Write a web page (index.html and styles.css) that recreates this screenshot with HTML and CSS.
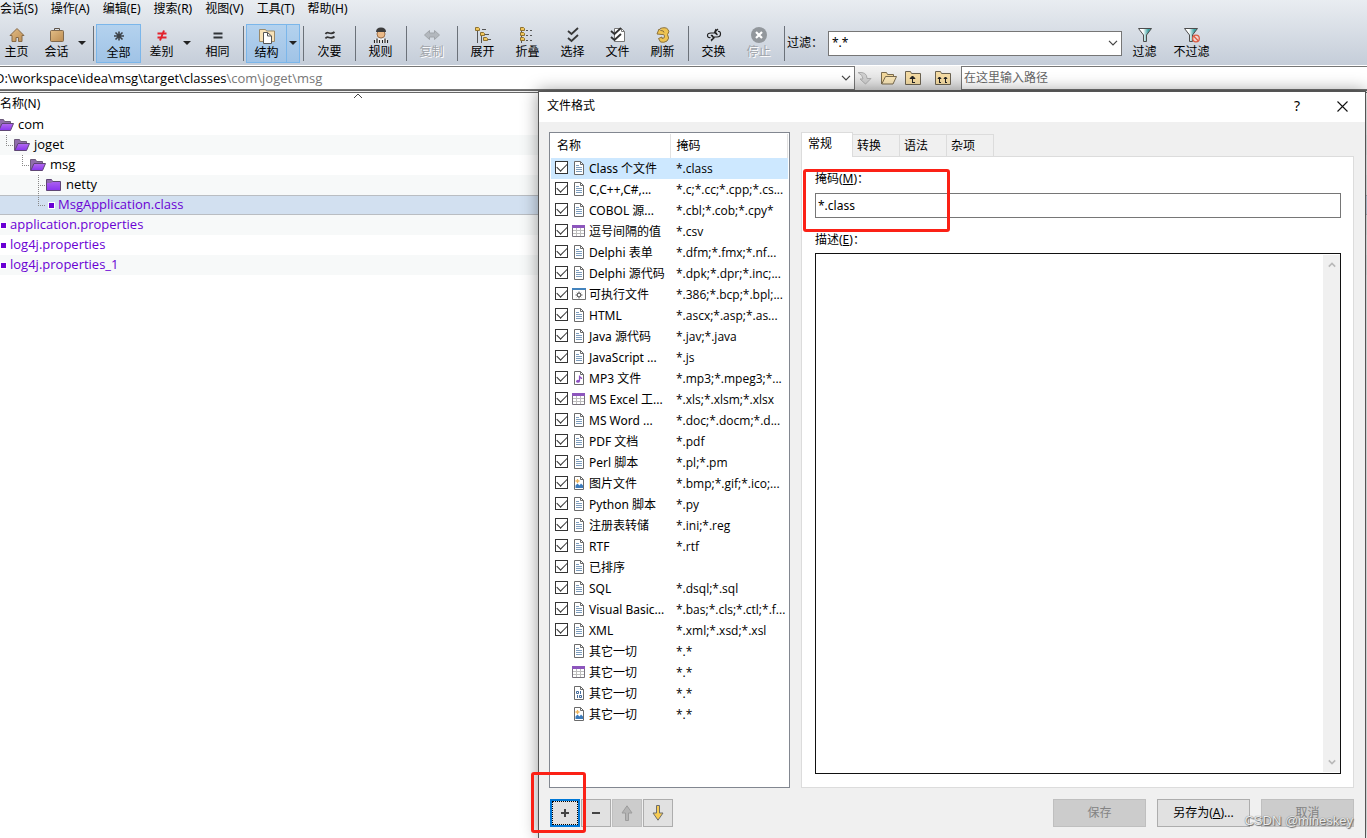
FILE: index.html
```html
<!DOCTYPE html>
<html lang="zh-CN">
<head>
<meta charset="utf-8">
<title>文件格式</title>
<link rel="stylesheet" href="styles.css">
</head>
<body>
<svg class="defs" aria-hidden="true">
  <defs>
    <linearGradient id="tan" x1="0" y1="0" x2="1" y2="1"><stop offset="0" stop-color="#e2bd86"/><stop offset="1" stop-color="#bd8d52"/></linearGradient>
    <linearGradient id="teal" x1="0" y1="0" x2="1" y2="0"><stop offset="0.35" stop-color="#ffffff"/><stop offset="0.75" stop-color="#3fa3a3"/></linearGradient>
    <linearGradient id="violet" x1="0" y1="0" x2="0" y2="1"><stop offset="0" stop-color="#b36bf0"/><stop offset="1" stop-color="#8a35ee"/></linearGradient>
    <symbol id="doc" viewBox="0 0 14 14"><path d="M2.500.5h6l3 3v10h-9z" fill="#fff" stroke="#6a6a6a"/><path d="M8.500.5v3h3" fill="none" stroke="#6a6a6a"/><path d="M4 4.500h3M4 6.500h6M4 8.500h6M4 10.500h6" stroke="#7c9cbc"/></symbol>
    <symbol id="grid" viewBox="0 0 14 14"><path d="M.5 1.500h12v11H.5z" fill="#fff" stroke="#77727c"/><path d="M1 6.500h11M1 9.500h11M4.500 4v8M8.500 4v8" stroke="#bdbdbd"/><path d="M0 1h13v3H0z" fill="#8d56bd"/></symbol>
    <symbol id="exe" viewBox="0 0 14 14"><path d="M.5 1.500h13v11H.5z" fill="#fff" stroke="#707070"/><path d="M0 1h14v2H0z" fill="#4383bd"/><circle cx="7" cy="8" r="1.800" fill="none" stroke="#666" stroke-width="1.200"/><path d="M7 4.500v1.500M7 10v1.500M3.500 8H5M9 8h1.500M4.800 5.800l1 1M8.200 9.200l1 1M9.200 5.800l-1 1M5.800 9.200l-1 1" stroke="#666"/></symbol>
    <symbol id="music" viewBox="0 0 14 14"><path d="M2.500.5h6l3 3v10h-9z" fill="#fff" stroke="#6a6a6a"/><path d="M8.500.5v3h3" fill="none" stroke="#6a6a6a"/><path d="M7.500 10V4.500q0 2 2 2.500v1" fill="none" stroke="#8d4fc0" stroke-width="1.200"/><ellipse cx="6" cy="10.300" rx="1.900" ry="1.500" fill="#8d4fc0"/></symbol>
    <symbol id="pic" viewBox="0 0 14 14"><path d="M2.500.5h6l3 3v10h-9z" fill="#fff" stroke="#6a6a6a"/><path d="M8.500.5v3h3" fill="none" stroke="#6a6a6a"/><path d="M3.500 12V9.500l2-2 2 2 1.500-2 2 2V12z" fill="#3c7bbb"/><path d="M5.500 3v4M3.500 5h4" stroke="#efb55a" stroke-width="1.300"/></symbol>
    <symbol id="bin" viewBox="0 0 14 14"><path d="M2.500.5h6l3 3v10h-9z" fill="#fff" stroke="#6a6a6a"/><path d="M8.500.5v3h3" fill="none" stroke="#6a6a6a"/><path d="M4.500 5.500h2v2h-2zM8.500 5v3M7.500 9.500h2v2h-2zM5.500 9v3" fill="none" stroke="#436b9c"/></symbol>
    <symbol id="vopen" viewBox="0 0 16 14"><path d="M.5 12.500V1.500h5l1 2h6v3" fill="#8f6cab" stroke="#6c5a7a"/><path d="M.8 12.500L4 5.500h11.500l-3 7z" fill="url(#violet)" stroke="#5f4675"/></symbol>
    <symbol id="vclosed" viewBox="0 0 16 14"><path d="M.5 12.500V1.500h5l1 2h8v9z" fill="url(#violet)" stroke="#5f4675"/><path d="M1 2h4.500l1 2L5 5H1z" fill="#8f6cab"/></symbol>
    <symbol id="funnel" viewBox="0 0 16 16"><path d="M1.500 1.500h13L9.500 8v6.500h-3V8z" fill="url(#teal)" stroke="#4d4d4d"/></symbol>
    <symbol id="chev" viewBox="0 0 10 6"><path d="M1 .8l4 4 4-4" fill="none" stroke="#444" stroke-width="1.200"/></symbol>
    <symbol id="tri" viewBox="0 0 8 4"><path d="M0 0h8L4 4z" fill="#222"/></symbol>
  </defs>
</svg>

<main class="app">
  <nav class="menu">
    <button>会话(S)</button><button>操作(A)</button><button>编辑(E)</button><button>搜索(R)</button><button>视图(V)</button><button>工具(T)</button><button>帮助(H)</button>
  </nav>

  <div class="toolbar">
    <button class="tool home"><svg viewBox="0 0 16 16"><path d="M8 1.500L1 8.500h2v6h4v-4h2.500v4H13v-6h2z" fill="url(#tan)" stroke="#866a48"/></svg>主页</button>
    <button class="tool narrow"><svg viewBox="0 0 16 16"><path d="M5.500 3V1.500h5V3" fill="none" stroke="#5d5348"/><rect x="1.500" y="3.500" width="13" height="11" rx="1" fill="url(#tan)" stroke="#80694e"/></svg>会话</button>
    <button class="drop" aria-label="会话选项"><svg><use href="#tri"/></svg></button>
    <i class="sep"></i>
    <button class="tool on"><svg viewBox="0 0 16 16"><path d="M8 3.500v9M3 8h10M4.500 4.500l7 7M11.500 4.500l-7 7" stroke="#3c4248" stroke-width="1.600"/></svg>全部</button>
    <button class="tool narrow"><svg viewBox="0 0 16 16"><path d="M3.500 6.500h9M3.500 10.500h9M10 3.500l-4 10" stroke="#e3222c" stroke-width="2"/></svg>差别</button>
    <button class="drop" aria-label="差别选项"><svg><use href="#tri"/></svg></button>
    <button class="tool"><svg viewBox="0 0 16 16"><path d="M3.500 6.500h9M3.500 10.500h9" stroke="#303438" stroke-width="2"/></svg>相同</button>
    <i class="sep"></i>
    <button class="tool narrow on"><svg viewBox="0 0 16 16"><path d="M.5 13.500v-12h6l1 1.500h8v10.500z" fill="#f7e2b8" stroke="#9b8a6a"/><path d="M4.500 4.500h4l4 3.500v7.500h-8z" fill="#fff" stroke="#555"/><path d="M8.500 4.500V8h4" fill="none" stroke="#555"/></svg>结构</button>
    <button class="drop on" aria-label="结构选项"><svg><use href="#tri"/></svg></button>
    <i class="sep"></i>
    <button class="tool"><svg viewBox="0 0 16 16"><path d="M3.500 7c2-4 4.500 2 9-2M3.500 11.500c2-4 4.500 2 9-2" fill="none" stroke="#333" stroke-width="1.700"/></svg>次要</button>
    <i class="sep"></i>
    <button class="tool"><svg viewBox="0 0 16 16"><circle cx="8" cy="7" r="4" fill="#eab987" stroke="#9c704b"/><path d="M3 5q0-4.500 5-4.500T13 5H3z" fill="#3c3c3c"/><path d="M.5 16q0-4 4.500-5l3 1.500 3-1.500q4.500 1 4.500 5z" fill="#f4f4f4"/><path d="M1.500 16v-3M4 16v-4.500M6.500 16v-3M9.500 16v-3M12 16v-4.500M14.500 16v-3" stroke="#222" stroke-width="1.200"/></svg>规则</button>
    <i class="sep"></i>
    <button class="tool" disabled><svg viewBox="0 0 16 16"><path d="M.5 8l5-4.500V6h5V3.500l5 4.500-5 4.500V10h-5v2.500z" fill="#b3b8be" stroke="#a0a5aa"/></svg>复制</button>
    <i class="sep"></i>
    <button class="tool"><svg viewBox="0 0 16 16"><path d="M2.500 4v12M6.500 6v10M2.500 2.500h2M7 2.500h4M10 7.500h4M13 12.500h3" stroke="#555" fill="none"/><path d="M.5.5h3l1 1v2h-4zM5.500 5.500h3l1 1v2h-4zM8.500 10.500h3l1 1v2h-4z" fill="#f1c65b" stroke="#8f7230"/></svg>展开</button>
    <button class="tool"><svg viewBox="0 0 16 16"><path d="M1.500 3v13M6 3.500h2M10 3.500h2M6 8.500h2M10 8.500h2M6 13.500h2M10 13.500h2" stroke="#555"/><path d="M.5.5h3l1 1v2h-4zM.5 5.500h3l1 1v2h-4zM.5 10.500h3l1 1v2h-4z" fill="#f1c65b" stroke="#8f7230"/></svg>折叠</button>
    <button class="tool"><svg viewBox="0 0 16 16"><path d="M3 4l3.500 3L13 1M3 11l3.500 3L13 8" fill="none" stroke="#383838" stroke-width="1.800"/></svg>选择</button>
    <button class="tool"><svg viewBox="0 0 16 16"><path d="M4.500 1.500h7l3 3v10h-10z" fill="#fff" stroke="#777"/><path d="M11.500 1.500v3h3" fill="none" stroke="#777"/><path d="M1 4l3.500 3L11 1M1 10l3.500 3L11 7" fill="none" stroke="#333" stroke-width="1.800"/></svg>文件</button>
    <button class="tool"><svg viewBox="0 0 16 16"><path d="M5 1.500q6-2 8 1 2 2-.5 5 2.500 4-.5 6.500-3 2-6.500 1L3.500 11.500 7 10v1.500q3 0 2.500-2.500T7 7.500L2 7l2-5 2 1.500q3 0 3 2" fill="#efc451" stroke="#8c713a"/></svg>刷新</button>
    <i class="sep"></i>
    <button class="tool"><svg viewBox="0 0 16 16"><path d="M10 6H5q-3.500 0-3.500 2.500T4.500 10.500M6 10h5q3.500 0 3.500-3T12 4.500M10 2L8.500 5.500 11.500 8M6 8l2 3-3 3M12 2l-3 3 2 2M5 8l3 3-3 2" fill="none" stroke="#222" stroke-width="1.200"/></svg>交换</button>
    <button class="tool" disabled><svg viewBox="0 0 16 16"><circle cx="8" cy="8" r="8" fill="#92979c"/><path d="M5 5l6 6M11 5l-6 6" stroke="#fff" stroke-width="2.200"/></svg>停止</button>
    <i class="sep"></i>
    <label class="filter-label" for="filter">过滤：</label>
    <span class="combo"><select id="filter"><option>*.*</option></select><svg class="chev"><use href="#chev"/></svg></span>
    <button class="tool"><svg><use href="#funnel"/></svg>过滤</button>
    <button class="tool wide"><svg viewBox="0 0 18 16"><path d="M1.500 1.500h13L9.500 8v6.500h-3V8z" fill="url(#teal)" stroke="#4d4d4d"/><circle cx="13" cy="11.500" r="3.300" fill="#f2d8d2" stroke="#dc5b42" stroke-width="1.300"/><path d="M10.800 9.300l4.400 4.400" stroke="#dc5b42" stroke-width="1.300"/></svg>不过滤</button>
  </div>

  <div class="pathbar">
    <button class="path" role="combobox" aria-expanded="false" aria-controls="tree" aria-label="路径"><span class="path-text">D:\workspace\idea\msg\target\classes<span class="dim">\com\joget\msg</span></span><svg class="chev"><use href="#chev"/></svg></button>
    <div class="path-tools">
      <button aria-label="转到" disabled><svg viewBox="0 0 16 16"><path d="M1 2.500q9-1 9 6h4L8.500 14 3 9h3q0-4-5-6.500z" fill="#d0d0d0" stroke="#acacac"/></svg></button>
      <button aria-label="浏览"><svg viewBox="0 0 16 16"><path d="M.5 14V2.500h5l1 2h6V7" fill="#f3d99d" stroke="#7b6c4f"/><path d="M.8 14L4.500 6.500h11L12 14z" fill="#f8e5b7" stroke="#7b6c4f"/></svg></button>
      <button aria-label="上一级"><svg viewBox="0 0 16 16"><path d="M.5 14.500v-13h5l1 2h9v11z" fill="#f4dba3" stroke="#6b6250"/><path d="M7 12.500h3M7.500 12V7M5 8.500L7.500 6 10 8.500z" stroke="#222" fill="#222"/></svg></button>
      <button class="gap" aria-label="两侧上一级"><svg viewBox="0 0 16 16"><path d="M.5 14.500v-13h5l1 2h9v11z" fill="#f4dba3" stroke="#6b6250"/><path d="M4 12.500h2M4.500 12V7M3 8.500L4.500 7 6 8.500zM10 12.500h2M10.500 12V7M9 8.500L10.500 7 12 8.500z" stroke="#222" fill="#222"/></svg></button>
    </div>
    <input class="path2" type="text" placeholder="在这里输入路径" aria-label="右侧路径">
  </div>

  <section class="files">
    <header class="files-head"><span>名称(N)</span><svg viewBox="0 0 10 6"><path d="M1 5l4-4 4 4" fill="none" stroke="#444"/></svg></header>
    <ul class="tree" id="tree">
      <li class="l0"><svg><use href="#vopen"/></svg>com</li>
      <li class="l1"><i class="elbow"></i><svg><use href="#vopen"/></svg>joget</li>
      <li class="l2"><i class="elbow"></i><svg><use href="#vopen"/></svg>msg</li>
      <li class="l3"><i class="elbow tee"></i><svg><use href="#vclosed"/></svg>netty</li>
      <li class="l3 orphan picked"><i class="elbow"></i><b class="dot"></b>MsgApplication.class</li>
      <li class="orphan"><b class="dot"></b>application.properties</li>
      <li class="orphan"><b class="dot"></b>log4j.properties</li>
      <li class="orphan"><b class="dot"></b>log4j.properties_1</li>
    </ul>
  </section>
</main>

<div class="dialog" role="dialog" aria-labelledby="dlg-title">
  <header class="titlebar">
    <span id="dlg-title">文件格式</span>
    <button class="help" aria-label="帮助">?</button>
    <button aria-label="关闭"><svg viewBox="0 0 11 11"><path d="M.5.5l10 10M10.500.5l-10 10" stroke="#111" stroke-width="1.100"/></svg></button>
  </header>
  <div class="dlg-body">
    <div class="formats">
      <table>
        <thead><tr><th>名称</th><th>掩码</th></tr></thead>
        <tbody>
          <tr class="sel"><td><label><input type="checkbox" checked><svg><use href="#doc"/></svg>Class 个文件</label></td><td>*.class</td></tr>
          <tr><td><label><input type="checkbox" checked><svg><use href="#doc"/></svg>C,C++,C#,...</label></td><td>*.c;*.cc;*.cpp;*.cs...</td></tr>
          <tr><td><label><input type="checkbox" checked><svg><use href="#doc"/></svg>COBOL 源...</label></td><td>*.cbl;*.cob;*.cpy*</td></tr>
          <tr><td><label><input type="checkbox" checked><svg><use href="#grid"/></svg>逗号间隔的值</label></td><td>*.csv</td></tr>
          <tr><td><label><input type="checkbox" checked><svg><use href="#doc"/></svg>Delphi 表单</label></td><td>*.dfm;*.fmx;*.nf...</td></tr>
          <tr><td><label><input type="checkbox" checked><svg><use href="#doc"/></svg>Delphi 源代码</label></td><td>*.dpk;*.dpr;*.inc;...</td></tr>
          <tr><td><label><input type="checkbox" checked><svg><use href="#exe"/></svg>可执行文件</label></td><td>*.386;*.bcp;*.bpl;...</td></tr>
          <tr><td><label><input type="checkbox" checked><svg><use href="#doc"/></svg>HTML</label></td><td>*.ascx;*.asp;*.as...</td></tr>
          <tr><td><label><input type="checkbox" checked><svg><use href="#doc"/></svg>Java 源代码</label></td><td>*.jav;*.java</td></tr>
          <tr><td><label><input type="checkbox" checked><svg><use href="#doc"/></svg>JavaScript ...</label></td><td>*.js</td></tr>
          <tr><td><label><input type="checkbox" checked><svg><use href="#music"/></svg>MP3 文件</label></td><td>*.mp3;*.mpeg3;*...</td></tr>
          <tr><td><label><input type="checkbox" checked><svg><use href="#grid"/></svg>MS Excel 工...</label></td><td>*.xls;*.xlsm;*.xlsx</td></tr>
          <tr><td><label><input type="checkbox" checked><svg><use href="#doc"/></svg>MS Word ...</label></td><td>*.doc;*.docm;*.d...</td></tr>
          <tr><td><label><input type="checkbox" checked><svg><use href="#doc"/></svg>PDF 文档</label></td><td>*.pdf</td></tr>
          <tr><td><label><input type="checkbox" checked><svg><use href="#doc"/></svg>Perl 脚本</label></td><td>*.pl;*.pm</td></tr>
          <tr><td><label><input type="checkbox" checked><svg><use href="#pic"/></svg>图片文件</label></td><td>*.bmp;*.gif;*.ico;...</td></tr>
          <tr><td><label><input type="checkbox" checked><svg><use href="#doc"/></svg>Python 脚本</label></td><td>*.py</td></tr>
          <tr><td><label><input type="checkbox" checked><svg><use href="#doc"/></svg>注册表转储</label></td><td>*.ini;*.reg</td></tr>
          <tr><td><label><input type="checkbox" checked><svg><use href="#doc"/></svg>RTF</label></td><td>*.rtf</td></tr>
          <tr><td><label><input type="checkbox" checked><svg><use href="#doc"/></svg>已排序</label></td><td></td></tr>
          <tr><td><label><input type="checkbox" checked><svg><use href="#doc"/></svg>SQL</label></td><td>*.dsql;*.sql</td></tr>
          <tr><td><label><input type="checkbox" checked><svg><use href="#doc"/></svg>Visual Basic...</label></td><td>*.bas;*.cls;*.ctl;*.f...</td></tr>
          <tr><td><label><input type="checkbox" checked><svg><use href="#doc"/></svg>XML</label></td><td>*.xml;*.xsd;*.xsl</td></tr>
          <tr><td><span class="fixed"><svg><use href="#doc"/></svg>其它一切</span></td><td>*.*</td></tr>
          <tr><td><span class="fixed"><svg><use href="#grid"/></svg>其它一切</span></td><td>*.*</td></tr>
          <tr><td><span class="fixed"><svg><use href="#bin"/></svg>其它一切</span></td><td>*.*</td></tr>
          <tr><td><span class="fixed"><svg><use href="#pic"/></svg>其它一切</span></td><td>*.*</td></tr>
        </tbody>
      </table>
    </div>
    <div class="settings">
      <div class="tabs" role="tablist">
        <button role="tab" aria-selected="true" class="active">常规</button><button role="tab">转换</button><button role="tab">语法</button><button role="tab">杂项</button>
      </div>
      <div class="panel">
        <label for="mask">掩码(<u>M</u>)：</label>
        <input id="mask" type="text" value="*.class">
        <label for="desc">描述(<u>E</u>)：</label>
        <div class="memo">
          <textarea id="desc"></textarea>
          <div class="scroll"><svg viewBox="0 0 10 6"><path d="M1 5l4-4 4 4" fill="none" stroke="#b9b9b9" stroke-width="2"/></svg><svg viewBox="0 0 10 6"><path d="M1 1l4 4 4-4" fill="none" stroke="#b9b9b9" stroke-width="2"/></svg></div>
        </div>
      </div>
    </div>
  </div>
  <footer class="dlg-foot">
    <button class="sq focus" aria-label="添加"><svg viewBox="0 0 16 16"><path d="M8 4v8M4 8h8" stroke="#444" stroke-width="2"/></svg></button>
    <button class="sq" aria-label="删除"><svg viewBox="0 0 16 16"><path d="M4 8h8" stroke="#444" stroke-width="2"/></svg></button>
    <button class="sq" aria-label="上移" disabled><svg viewBox="0 0 16 16"><path d="M8 .8L13 8H9.500v7.500h-3V8H3z" fill="#b4b4b4" stroke="#9c9c9c"/></svg></button>
    <button class="sq" aria-label="下移"><svg viewBox="0 0 16 16"><path d="M8 15.200L3 8h3.500V.5h3V8H13z" fill="#f6cb52" stroke="#6d6d6d"/></svg></button>
    <span class="grow"></span>
    <button class="cmd" disabled>保存</button>
    <button class="cmd">另存为(<u>A</u>)...</button>
    <button class="cmd" disabled>取消</button>
  </footer>
  <i class="mark mark-mask"></i>
  <i class="mark mark-add"></i>
  <span class="watermark">CSDN @mineskey</span>
</div>
</body>
</html>
```
FILE: styles.css
```css
* { box-sizing: border-box; }
body, button, input, select, textarea { font: 12px/16px "Noto Sans", "Noto Sans CJK SC", sans-serif; color: #000; }
body { margin: 0; height: 100vh; overflow: hidden; background: #fff; }
button { padding: 0; border: 0; background: none; white-space: nowrap; }
input, select, textarea { border-radius: 0; outline: 0; }
svg { display: block; flex: none; width: 16px; height: 16px; }
.defs { position: absolute; width: 0; height: 0; }
.grow { flex: 1; }

.app { display: flex; flex-direction: column; height: 100%; background: linear-gradient(#e9edf1, #c5cdd9 65px, #fff 65px); }
.menu { display: flex; gap: 13px; height: 22px; padding-bottom: 4px; }

.toolbar { display: flex; align-items: center; height: 43px; padding: 0 151px 1px 1px; }
.tool { display: flex; flex-direction: column; align-items: center; gap: 1px; flex: none; width: 45px; height: 39px; padding: 3px 0 2px; }
.tool.home { width: 35px; padding-right: 4px; }
.tool.narrow { width: 41px; }
.tool.wide { width: 49px; }
.tool.wide svg { width: 18px; }
.tool:disabled { color: #a0a4aa; text-shadow: 1px 1px #fff; }
.on { border: 1px solid #7bb6ea; background: linear-gradient(#b4d2ee, #a0c3e6); }
.tool.on { padding: 3px 0 0; }
.drop { display: grid; place-items: center start; flex: none; width: 13px; height: 39px; padding-left: 1px; }
.drop.on { border-left: 0; padding-left: 2px; }
.drop svg { width: 8px; height: 4px; }
.sep { flex: none; width: 6px; height: 35px; background: linear-gradient(#6b7179, #6b7179) 3px 0 / 1px 100% no-repeat; }
.drop.on + .sep { width: 7px; }
.filter-label { flex: none; width: 41px; }
.combo { display: flex; flex: 1; align-items: center; height: 25px; border: 1px solid #767676; background: #fff; }
.combo select { flex: 1; appearance: none; height: 100%; border: 0; padding: 0 3px; background: none; }
.chev { width: 10px; height: 6px; margin: 0 3px 0 -13px; }

.pathbar { display: flex; height: 28px; border-top: 1px solid #fff; border-bottom: 3px double #666; background: linear-gradient(#f2f2f2, #dcdcdc); }
.path { display: flex; align-items: center; flex: none; width: 63%; max-width: 855px; border: 1px solid #767676; border-left: 0; background: #fff; text-align: left; }
.path-text { flex: 1; margin-left: -5px; font: 13px/16px "Open Sans", "Noto Sans CJK SC", sans-serif; }
.dim { color: #777; }
.path-tools { display: flex; align-items: center; flex: none; width: 106px; gap: 8px; padding-left: 2px; }
.path-tools .gap { margin-left: 6px; }
.path2 { flex: 1; min-width: 0; padding: 0 2px; border: 1px solid #767676; border-right: 0; background: #fff; }
.path2::placeholder { color: #666; opacity: 1; }

.files { flex: 1; background: #fff; }
.files-head { display: flex; height: 22px; padding-top: 3px; }
.files-head span { width: 353px; }
.files-head svg { width: 10px; height: 6px; margin-top: -3px; }
.tree { margin: 0; padding: 0; list-style: none; }
.tree li { display: flex; align-items: center; height: 20px; padding-bottom: 1px; font: 13px/17px "Open Sans", "Noto Sans CJK SC", sans-serif; }
.tree li:nth-child(even) { background: #f7f9f9; }
.tree svg { height: 14px; margin-right: 4px; }
.tree .l0 { margin-left: -2px; }
.tree .l1 { padding-left: 6px; }
.tree .l2 { padding-left: 22px; }
.tree .l3 { padding-left: 38px; }
.elbow { width: 8px; height: 20px; background: repeating-linear-gradient(#888 0 1px, transparent 1px 2px) 0 0 / 1px 11px no-repeat, repeating-linear-gradient(90deg, #888 0 1px, transparent 1px 2px) 0 10px / 8px 1px no-repeat; }
.elbow.tee { background-size: 1px 20px, 8px 1px; }
.orphan { color: #6a00d4; }
.tree .picked { border: 1px solid #b9bdc2; border-width: 1px 0; background: #d2e0f0; }
.dot { width: 7px; height: 7px; margin: 2px 3px 0 0; border: 1px solid #fff; background: #6a00d4; }
.picked .dot { margin-left: 2px; }

.dialog { position: absolute; top: 91px; right: 1px; bottom: 0; left: 538px; display: flex; flex-direction: column; border: 1px solid #555; border-bottom: 0; background: #f0f0f0; box-shadow: 0 0 16px rgba(0, 0, 0, .4); }
.titlebar { display: flex; align-items: center; height: 30px; padding: 0 17px 2px 8px; background: #fff; }
.titlebar span { flex: 1; }
.titlebar svg { width: 11px; height: 11px; }
.titlebar .help { margin-right: 37px; font-size: 14px; }
.dlg-body { display: flex; flex: 1; gap: 11px; min-height: 0; padding: 10px 11px 0 10px; }
.formats { flex: none; width: 241px; padding: 1px; border: 1px solid #828790; background: #fff; }
.formats table { width: 237px; border-collapse: collapse; table-layout: fixed; }
.formats th, .formats td { height: 21px; padding: 0 0 0 6px; font-weight: 400; text-align: left; white-space: nowrap; }
.formats th { height: 24px; border-right: 1px solid #e2e2e2; }
.formats th:first-child { width: 119px; }
.formats td:first-child { padding-left: 4px; }
.formats td:last-child { font-family: "Open Sans", sans-serif; }
.sel { background: #cde8ff; }
.formats label, .fixed { display: flex; align-items: center; }
.formats td svg { width: 14px; height: 14px; margin: 0 3px 1px 4px; }
.fixed { padding-left: 13px; }
input[type="checkbox"] { flex: none; appearance: none; width: 13px; height: 13px; margin: 0 0 2px; border: 1px solid #333; background: #fff; display: grid; place-items: center; }
input[type="checkbox"]:checked::after { content: ""; width: 9px; height: 5px; margin-top: -4px; border: solid #333; border-width: 0 0 1px 1px; transform: rotate(-45deg); }

.settings { display: flex; flex: 1; flex-direction: column; min-width: 0; }
.tabs { display: flex; align-items: flex-end; height: 24px; }
.tabs button { width: 47px; height: 22px; border: 1px solid #dcdcdc; border-width: 1px 1px 0 0; padding-right: 14px; background: #f0f0f0; }
.tabs .active { z-index: 1; width: 52px; height: 25px; margin-bottom: -1px; padding-bottom: 3px; border-left-width: 1px; background: #fff; }
.panel { display: flex; flex: 1; flex-direction: column; padding: 14px 12px 13px 13px; border: 1px solid #dcdcdc; background: #fff; }
.panel input { height: 25px; margin: 6px 0 14px; padding: 0 2px; border: 1px solid #767676; }
.memo { display: flex; flex: 1; margin-top: 5px; border: 1px solid #111; }
.memo textarea { flex: 1; padding: 2px; border: 0; resize: none; }
.scroll { display: flex; flex-direction: column; justify-content: space-between; align-items: center; width: 17px; margin: 1px 0; padding: 7px 0; background: #f0f0f0; }
.scroll svg { width: 8px; height: 6px; }

.dlg-foot { display: flex; gap: 11px; padding: 11px; }
.sq, .cmd { display: grid; place-items: center; width: 30px; height: 28px; border: 1px solid #adadad; background: #e1e1e1; }
.sq + .sq { margin-left: -10px; }
.cmd { display: block; width: 93px; }
.sq:disabled, .cmd:disabled { border-color: #bfbfbf; background: #ccc; color: #838383; }
.focus { border: 2px solid #0078d7; outline: 1px dotted #000; outline-offset: -3px; }

.mark { position: absolute; border: 3px solid #fb2116; border-radius: 3px; pointer-events: none; }
.mark-mask { top: 77px; left: 264px; width: 147px; height: 63px; }
.mark-add { bottom: 5px; left: -8px; width: 55px; height: 61px; }
.watermark { position: absolute; right: 12px; bottom: 8px; font: 13px/18px "Liberation Sans", Arial, sans-serif; color: #ececec; text-shadow: 0 0 1px #555, 1px 1px 1px #666; pointer-events: none; }
```
